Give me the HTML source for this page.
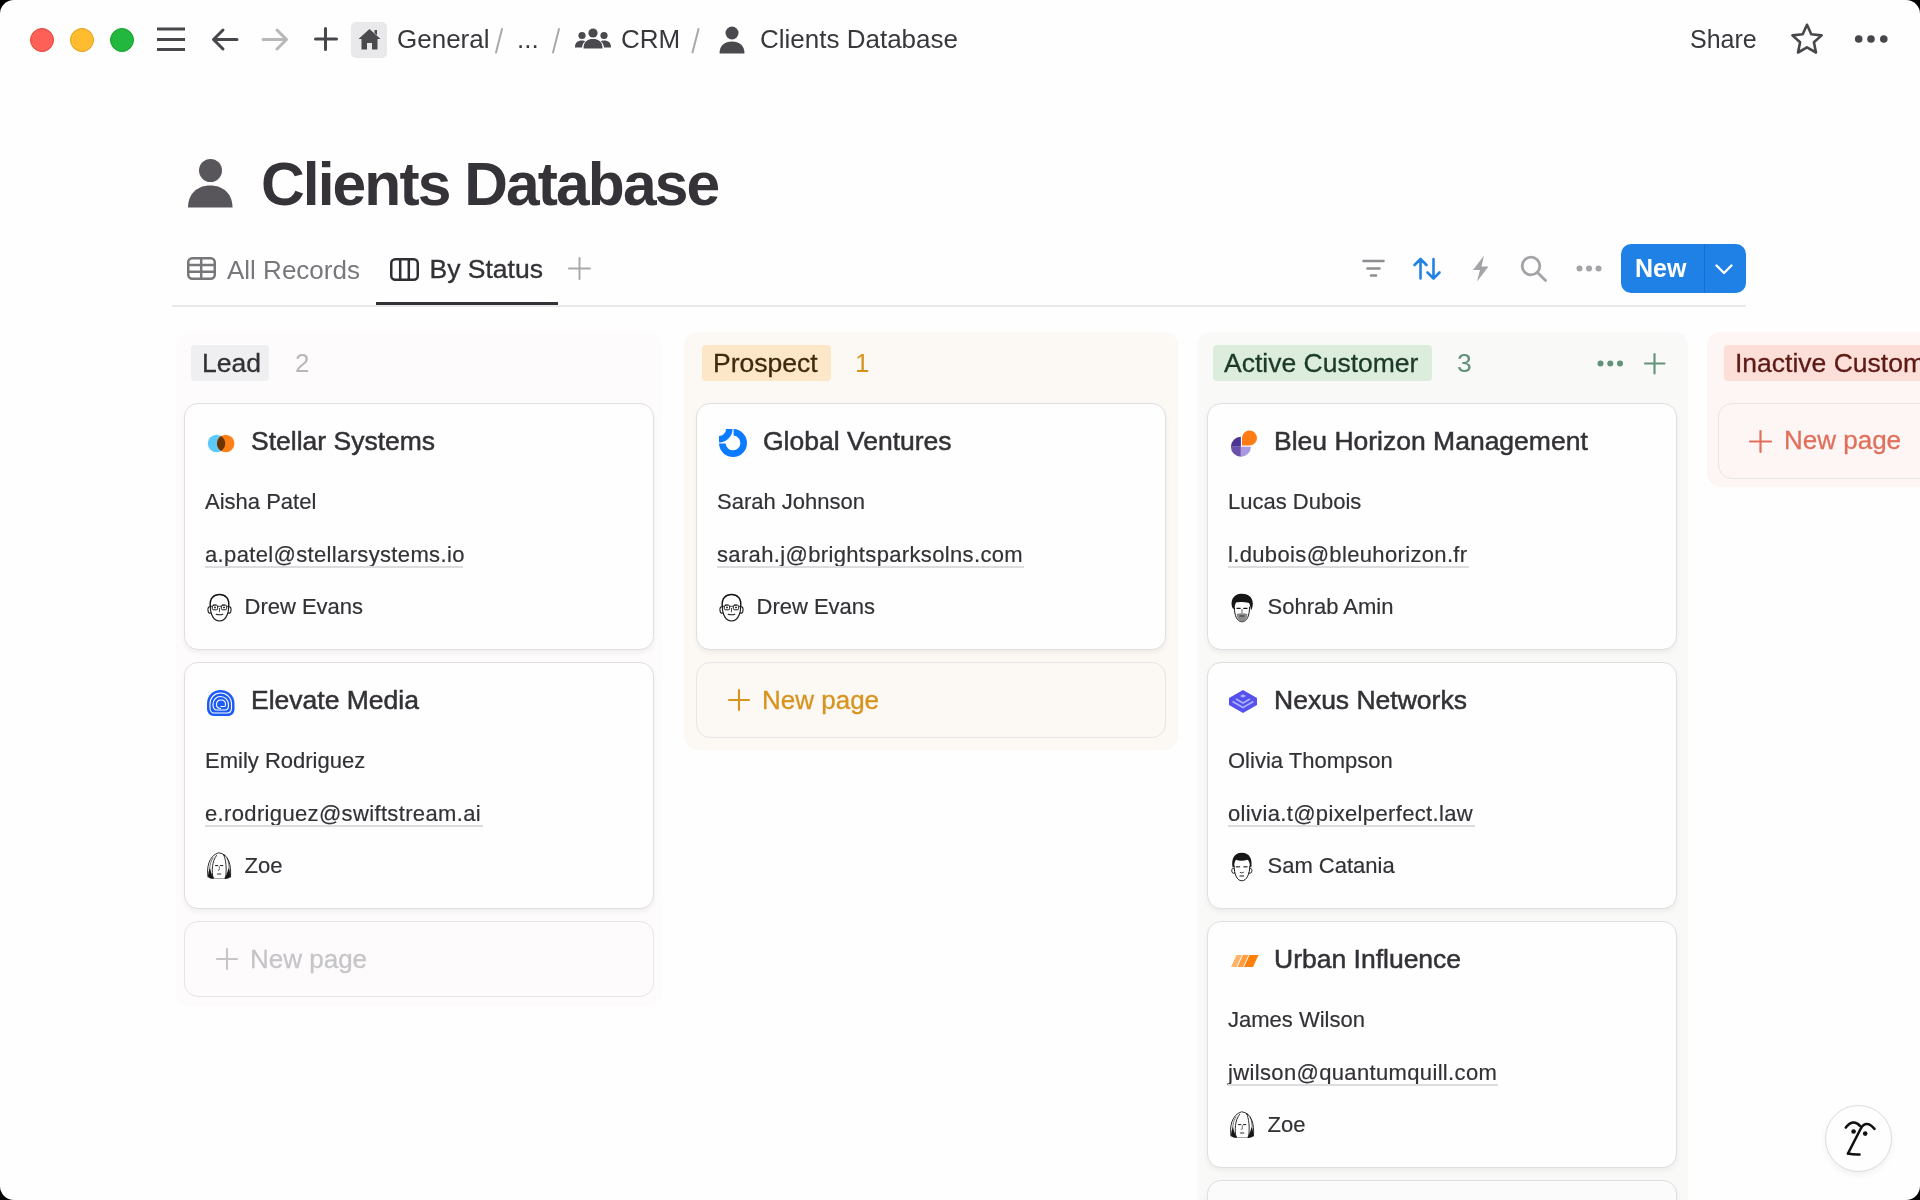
<!DOCTYPE html>
<html><head><meta charset="utf-8">
<style>
*{box-sizing:border-box;margin:0;padding:0}
html,body{width:1920px;height:1200px;overflow:hidden;background:#000}
body{font-family:"Liberation Sans",sans-serif;color:#333135}
#win{will-change:transform;position:absolute;left:0;top:0;width:1920px;height:1200px;background:#fffeff;border-radius:14px;overflow:hidden}
.a{position:absolute;white-space:nowrap;line-height:1}
svg{position:absolute;overflow:visible}
.col{position:absolute;border-radius:14px}
.card{position:absolute;width:470px;height:247px;background:#fffeff;border:1.5px solid #dfdee1;border-radius:14px;box-shadow:0 3px 5px rgba(15,15,15,0.05)}
.np{position:absolute;width:470px;height:76px;border:1.5px solid #e6e5e7;border-radius:14px}
.npt{-webkit-text-stroke:0.3px currentColor}
.ct{font-size:26.5px;-webkit-text-stroke:0.5px currentColor}
.cb{font-size:22px;-webkit-text-stroke:0.2px currentColor}
.eml{letter-spacing:0.35px}
.em{border-bottom:1.5px solid #dedde0;padding-bottom:0}
.tag{position:absolute;height:36px;border-radius:4px}
</style></head><body>
<div id="win">

<!-- traffic lights -->
<div class="a" style="left:30px;top:28px;width:24px;height:24px;border-radius:50%;background:#fe5f57;border:0.5px solid #e2463f"></div>
<div class="a" style="left:70px;top:28px;width:24px;height:24px;border-radius:50%;background:#febc2e;border:0.5px solid #dfa023"></div>
<div class="a" style="left:110px;top:28px;width:24px;height:24px;border-radius:50%;background:#22b83f;border:0.5px solid #1aa032"></div>

<!-- hamburger -->
<svg style="left:157px;top:27px" width="28" height="25"><g stroke="#47464a" stroke-width="3"><line x1="0" y1="2" x2="28" y2="2"/><line x1="0" y1="12.5" x2="28" y2="12.5"/><line x1="0" y1="22.5" x2="28" y2="22.5"/></g></svg>
<!-- back -->
<svg style="left:211px;top:28px" width="28" height="24"><g stroke="#47464a" stroke-width="3" fill="none" stroke-linecap="round" stroke-linejoin="round"><path d="M26,11.5 H2.5 M12,2 L2.5,11.5 L12,21"/></g></svg>
<!-- forward -->
<svg style="left:261px;top:28px" width="28" height="24"><g stroke="#b8b7ba" stroke-width="3" fill="none" stroke-linecap="round" stroke-linejoin="round"><path d="M2,11.5 H25.5 M16,2 L25.5,11.5 L16,21"/></g></svg>
<!-- plus -->
<svg style="left:314px;top:27px" width="24" height="24"><g stroke="#47464a" stroke-width="3" stroke-linecap="round"><path d="M11.5,1.5 V22.5 M1.5,12 H22.5"/></g></svg>
<!-- home box -->
<div class="a" style="left:351px;top:22px;width:36px;height:36px;border-radius:5px;background:#e9e8ea"></div>
<svg style="left:358px;top:28px" width="23" height="22" viewBox="0 0 23 22"><path fill="#4a494d" d="M11.5,1 L22.5,11 L19.5,11 L19.5,21.5 L14,21.5 L14,15 L9,15 L9,21.5 L3.5,21.5 L3.5,11 L0.5,11 Z M16.5,2 H19 V7 L16.5,5 Z"/></svg>

<div class="a" style="left:397px;top:26.2px;font-size:26px;color:#38373b">General</div>
<svg style="left:490px;top:24px" width="20" height="34"><path d="M12,5 L6,28.5" stroke="#a9a8ac" stroke-width="2" stroke-linecap="round"/></svg>
<div class="a" style="left:517px;top:26.2px;font-size:26px;color:#38373b">...</div>
<svg style="left:547px;top:24px" width="20" height="34"><path d="M12,5 L6,28.5" stroke="#a9a8ac" stroke-width="2" stroke-linecap="round"/></svg>
<!-- people icon -->
<svg style="left:575px;top:28px" width="36" height="21" viewBox="0 0 36 21"><g fill="#4a494d"><circle cx="18" cy="5" r="4.6"/><path d="M8.5,20.5 C8.5,13.5 12.5,11 18,11 C23.5,11 27.5,13.5 27.5,20.5 Z"/><circle cx="7" cy="7.5" r="3.6"/><path d="M0,19.5 C0,14.5 2.5,12.5 7,12.5 C8.5,12.5 9.5,12.8 10.3,13.3 C8.3,14.8 7.2,17 7,19.5 Z"/><circle cx="29" cy="7.5" r="3.6"/><path d="M36,19.5 C36,14.5 33.5,12.5 29,12.5 C27.5,12.5 26.5,12.8 25.7,13.3 C27.7,14.8 28.8,17 29,19.5 Z"/></g></svg>
<div class="a" style="left:621px;top:26.2px;font-size:26px;color:#38373b">CRM</div>
<svg style="left:686px;top:24px" width="20" height="34"><path d="M12.5,5 L6.5,28.5" stroke="#a9a8ac" stroke-width="2" stroke-linecap="round"/></svg>
<!-- person small -->
<svg style="left:719px;top:26px" width="26" height="28" viewBox="0 0 26 28"><g fill="#4a494d"><circle cx="13" cy="7" r="6.5"/><path d="M0.5,27.5 C0.5,19.5 5.5,15.5 13,15.5 C20.5,15.5 25.5,19.5 25.5,27.5 Z"/></g></svg>
<div class="a" style="left:760px;top:26.2px;font-size:26px;color:#38373b">Clients Database</div>

<div class="a" style="left:1690px;top:26.5px;font-size:25px;color:#38373b">Share</div>
<svg style="left:1790px;top:23px" width="34" height="33" viewBox="0 0 34 33"><path fill="none" stroke="#47464a" stroke-width="2.6" stroke-linejoin="round" d="M17,1.8 L21.3,11.3 L31.6,12.4 L23.9,19.3 L26,29.5 L17,24.3 L8,29.5 L10.1,19.3 L2.4,12.4 L12.7,11.3 Z"/></svg>
<svg style="left:1854px;top:34px" width="35" height="10"><g fill="#47464a"><circle cx="4.7" cy="5" r="3.8"/><circle cx="17" cy="5" r="3.8"/><circle cx="29.8" cy="5" r="3.8"/></g></svg>

<!-- title -->
<svg style="left:187px;top:158px" width="46" height="50" viewBox="0 0 46 50"><g fill="#58565b"><circle cx="23.5" cy="12.5" r="11.5"/><path d="M1,49.5 C1,36 10,27.5 23.2,27.5 C36.5,27.5 45.5,36 45.5,49.5 Z"/></g></svg>
<div class="a" style="left:261px;top:153.8px;font-size:60.5px;font-weight:700;color:#353337;letter-spacing:-1.9px">Clients Database</div>

<!-- tabs -->
<svg style="left:187px;top:257px" width="29" height="23" viewBox="0 0 29 23"><g fill="none" stroke="#77767a" stroke-width="2.5"><rect x="1.25" y="1.25" width="26.5" height="20.5" rx="4"/><path d="M14.2,1.5 V21.5 M1.5,8 H27.5 M1.5,14.8 H27.5"/></g></svg>
<div class="a" style="left:227px;top:256.7px;font-size:26px;color:#78777b">All Records</div>
<svg style="left:390px;top:258px" width="29" height="23" viewBox="0 0 29 23"><g fill="none" stroke="#2f2e32" stroke-width="2.5"><rect x="1.25" y="1.25" width="26.5" height="20.5" rx="4"/><path d="M10.2,1.5 V21.5 M18.8,1.5 V21.5"/></g></svg>
<div class="a" style="left:429.5px;top:256.3px;font-size:26.5px;color:#333135;-webkit-text-stroke:0.35px #333135">By Status</div>
<svg style="left:568px;top:257px" width="23" height="23"><g stroke="#a9a8ab" stroke-width="2" stroke-linecap="round"><path d="M11.5,1 V22 M1,11.5 H22"/></g></svg>
<div class="a" style="left:376px;top:302px;width:182px;height:3px;background:#333135"></div>
<div class="a" style="left:172px;top:305px;width:1574px;height:1.5px;background:#e9e8ea"></div>

<!-- toolbar -->
<svg style="left:1362px;top:259px" width="23" height="19"><g stroke="#8e8d91" stroke-width="2.6" stroke-linecap="round"><path d="M1.5,2 H21.5 M5.5,9.5 H17.5 M9,16.5 H14"/></g></svg>
<svg style="left:1413px;top:257px" width="28" height="24"><g stroke="#2383e2" stroke-width="2.6" fill="none" stroke-linecap="round" stroke-linejoin="round"><path d="M7.5,21.5 V2 M1.5,8 L7.5,2 L13.5,8 M20.5,2 V21.5 M14.5,15.5 L20.5,21.5 L26.5,15.5"/></g></svg>
<svg style="left:1471px;top:255px" width="19" height="27" viewBox="0 0 19 27"><path fill="#a4a3a7" d="M13,0.5 L2,15 H9 L6,26.5 L17.5,11.5 H10.5 Z"/></svg>
<svg style="left:1520px;top:255px" width="28" height="27"><g fill="none" stroke="#a4a3a7" stroke-width="2.8" stroke-linecap="round"><circle cx="11" cy="11" r="8.8"/><path d="M17.5,17.5 L25.5,25.5"/></g></svg>
<svg style="left:1576px;top:264px" width="26" height="9"><g fill="#a4a3a7"><circle cx="3.5" cy="4.5" r="3"/><circle cx="13" cy="4.5" r="3"/><circle cx="22.5" cy="4.5" r="3"/></g></svg>
<div class="a" style="left:1621px;top:244px;width:125px;height:49px;border-radius:10px;background:#1f80e6"></div>
<div class="a" style="left:1703.5px;top:244px;width:1px;height:49px;background:#1a6fc8"></div>
<div class="a" style="left:1635px;top:256px;font-size:25px;font-weight:700;color:#fff">New</div>
<svg style="left:1715px;top:264px" width="18" height="12"><path d="M1.5,1.5 L9,9 L16.5,1.5" fill="none" stroke="#fff" stroke-width="2.4" stroke-linecap="round" stroke-linejoin="round"/></svg>

<!-- ================= BOARD ================= -->
<!-- Lead column -->
<div class="col" style="left:176px;top:332px;width:486px;height:674px;background:#fdfbfc"></div>
<div class="tag" style="left:191px;top:345px;width:78px;background:#efeef0"></div>
<div class="a" style="left:202px;top:349.5px;font-size:26.5px;-webkit-text-stroke:0.3px #333135;color:#333135">Lead</div>
<div class="a" style="left:295px;top:350px;font-size:26px;color:#b7b6b9">2</div>

<!-- Prospect column -->
<div class="col" style="left:684px;top:332px;width:494px;height:418px;background:#fcf8f3"></div>
<div class="tag" style="left:702px;top:345px;width:129px;background:#fce8c9"></div>
<div class="a" style="left:713px;top:349.5px;font-size:26.5px;-webkit-text-stroke:0.3px #40290e;color:#40290e">Prospect</div>
<div class="a" style="left:855px;top:350px;font-size:26px;color:#d8931f">1</div>

<!-- Active column -->
<div class="col" style="left:1197px;top:332px;width:491px;height:900px;background:#f9f9f8"></div>
<div class="tag" style="left:1213px;top:345px;width:219px;background:#dcecdd"></div>
<div class="a" style="left:1224px;top:349.5px;font-size:26.5px;-webkit-text-stroke:0.3px #1c3a28;color:#1c3a28">Active Customer</div>
<div class="a" style="left:1457px;top:349.5px;font-size:26.5px;color:#62927a">3</div>
<svg style="left:1597px;top:359px" width="27" height="9"><g fill="#62927a"><circle cx="3.5" cy="4.5" r="3"/><circle cx="13.3" cy="4.5" r="3"/><circle cx="23" cy="4.5" r="3"/></g></svg>
<svg style="left:1644px;top:353px" width="22" height="22"><g stroke="#62927a" stroke-width="2.1" stroke-linecap="round"><path d="M10.5,1 V20.5 M1,10.5 H20.5"/></g></svg>

<!-- Inactive column -->
<div class="col" style="left:1707px;top:332px;width:400px;height:155px;background:#fef6f5"></div>
<div class="tag" style="left:1724px;top:345px;width:260px;background:#fddfda"></div>
<div class="a" style="left:1735px;top:349.5px;font-size:26.5px;-webkit-text-stroke:0.3px #5d1a15;color:#5d1a15">Inactive Customer</div>
<div class="np" style="left:1718px;top:402.5px;width:300px"></div>
<svg style="left:1749px;top:430px" width="23" height="23"><g stroke="#e0705c" stroke-width="2.2" stroke-linecap="round"><path d="M11.5,1 V22 M1,11.5 H22"/></g></svg>
<div class="a npt" style="left:1784px;top:427px;font-size:26px;color:#e0705c">New page</div>

<div class="card" style="left:184px;top:402.5px"></div>
<svg style="left:206.5px;top:433.5px" width="30" height="20" viewBox="0 0 30 20"><circle cx="9.5" cy="9.5" r="8.7" fill="#5ccbfc"/><circle cx="18.7" cy="9.5" r="8.7" fill="#ff7f17"/><path d="M14.1,2.1 A8.7,8.7 0 0 1 14.1,16.9 A8.7,8.7 0 0 1 14.1,2.1 Z" fill="#6a3300"/></svg>
<div class="a ct" style="left:251px;top:428.06px">Stellar Systems</div>
<div class="a cb" style="left:205px;top:491.17px">Aisha Patel</div>
<div class="a cb eml" style="left:205px;top:543.87px">a.patel@stellarsystems.io</div>
<div class="a" style="left:205px;top:566.0px;width:258px;height:1.5px;background:#dcdbde"></div>
<svg style="left:206px;top:591.5px" width="28" height="32" viewBox="0 0 28 32"><g fill="none" stroke="#161616" stroke-width="1.1" stroke-linecap="round"><path d="M4.3,14 C3.5,6.5 7.5,2.6 13.5,2.6 C19.5,2.6 23.5,6.5 22.7,14" stroke-width="1.5"/><path d="M4.3,14 C4.3,23 8,29 13.5,29 C19,29 22.7,23 22.7,14"/><path d="M4.2,15 C2,14 1.6,17 2.2,19.5 C2.6,21 3.5,21.4 4.8,21"/><path d="M22.8,15 C25,14 25.4,17 24.8,19.5 C24.4,21 23.5,21.4 22.2,21"/><rect x="6.3" y="13.2" width="5.4" height="4.6" rx="1.4" stroke-width="1"/><rect x="15.3" y="13.2" width="5.4" height="4.6" rx="1.4" stroke-width="1"/><path d="M11.7,14.3 H15.3 M4.4,14.3 H6.3 M20.7,14.3 H22.6" stroke-width="0.8"/><path d="M13.5,16.5 V19.5 C12.8,20 14.2,20 13.7,19.6" stroke-width="0.8"/><path d="M10.2,22.2 Q13.5,23.4 16.8,22.2"/></g><g fill="#161616"><path d="M7,13 Q9,11.8 11,13 Z M16,13 Q18,11.8 20,13 Z"/><circle cx="9" cy="15.4" r="0.9"/><circle cx="18" cy="15.4" r="0.9"/></g></svg>
<div class="a cb" style="left:244.5px;top:595.87px">Drew Evans</div>
<div class="card" style="left:184px;top:661.5px"></div>
<svg style="left:206px;top:688.5px" width="30" height="28" viewBox="0 0 30 28"><path fill="#1c5cf5" d="M14.5,1 C22,1 28.5,6.5 28.5,14.5 L28.5,20 C28.5,24.5 25.5,27 21.5,27 L8,27 C4,27 1,24 1,19.5 L1,14.5 C1,6.5 7,1 14.5,1 Z"/><g fill="none" stroke="#fff" stroke-width="1.1"><path d="M8,24 H21 C24.5,24 25.5,21.5 25.5,19 L25.5,15 C25.5,8.5 20.5,4 14.5,4 C8.5,4 4,8.5 4,15 L4,18.5 C4,22 6,24 8,24"/><path d="M9,21 H19 C21.5,21 22.5,19 22.5,16.5 C22.5,11 19,7.5 14.5,7.5 C10,7.5 7,11 7,15.5 C7,18.5 8.5,21 11,21"/><path d="M14.5,17.5 H18.5 C19.5,17.5 19.5,16.5 19.5,15.5 C19.5,12.5 17.5,11 15,11 C12,11 10.5,13 10.5,15.5 C10.5,18 12.5,19.5 15,19.5"/></g></svg>
<div class="a ct" style="left:251px;top:687.06px">Elevate Media</div>
<div class="a cb" style="left:205px;top:750.17px">Emily Rodriguez</div>
<div class="a cb eml" style="left:205px;top:802.87px">e.rodriguez@swiftstream.ai</div>
<div class="a" style="left:205px;top:825.0px;width:278px;height:1.5px;background:#dcdbde"></div>
<svg style="left:206px;top:850.5px" width="28" height="32" viewBox="0 0 28 32"><g fill="none" stroke="#161616" stroke-width="0.9" stroke-linecap="round"><path d="M2,26 C0.5,17 2.5,5 12.5,1.8 C22.5,2.5 25.5,14 24.5,26"/><path d="M7,27 C5.5,20 6,10 10.5,4.5"/><path d="M17.5,3.5 C20,8 21,18 19.5,27.5"/><path d="M4,24 C3,18 4,11 7,7 M21,7 C23.5,12 23.5,19 22.5,24" stroke-width="0.6"/><path d="M9,27.5 H17.5" stroke="#999"/><path d="M9.5,14.6 H11.8 M14.5,14.6 H16.8" stroke-width="1"/><path d="M13.3,15.5 V19 Q12.6,19.8 12,19.4" stroke-width="0.6"/><path d="M11.5,23 H14.8" stroke-width="0.9"/></g><g fill="#161616"><path d="M2,26 C2,22 3,19 4,17 C4.8,21 6,24.5 8.5,27.8 C6,28 3.5,27.5 2,26 Z"/><path d="M24.5,26 C24.5,22 23.5,19 22.5,17 C21.5,21 20.5,24.5 18,27.8 C20.5,28 23,27.5 24.5,26 Z"/><path d="M17,3.3 C18.5,3.6 19.3,4.3 19.7,5.5 C18.6,5.1 17.6,4.6 17,3.3 Z"/></g></svg>
<div class="a cb" style="left:244.5px;top:854.87px">Zoe</div>
<div class="np" style="left:184px;top:920.5px"></div>
<svg style="left:215.5px;top:947.5px" width="22" height="22"><g stroke="#c6c5c8" stroke-width="2.1" stroke-linecap="round"><path d="M11,1 V21 M1,11 H21"/></g></svg>
<div class="a npt" style="left:250px;top:945.89px;font-size:26px;color:#c6c5c8">New page</div>
<div class="card" style="left:696px;top:402.5px"></div>
<svg style="left:719px;top:429.0px" width="28" height="28" viewBox="0 0 28 28"><path fill="#0b7bff" d="M14.6,0 A14,14 0 1 1 0,14.6 L6.6,14.6 A7.4,7.4 0 1 0 14.6,6.6 Z"/><path fill="#0b7bff" d="M0,7 A7,7 0 0 0 7,0 L13.5,0 A13.5,13.5 0 0 1 0,13.5 Z"/></svg>
<div class="a ct" style="left:763px;top:428.06px">Global Ventures</div>
<div class="a cb" style="left:717px;top:491.17px">Sarah Johnson</div>
<div class="a cb eml" style="left:717px;top:543.87px">sarah.j@brightsparksolns.com</div>
<div class="a" style="left:717px;top:566.0px;width:307px;height:1.5px;background:#dcdbde"></div>
<svg style="left:718px;top:591.5px" width="28" height="32" viewBox="0 0 28 32"><g fill="none" stroke="#161616" stroke-width="1.1" stroke-linecap="round"><path d="M4.3,14 C3.5,6.5 7.5,2.6 13.5,2.6 C19.5,2.6 23.5,6.5 22.7,14" stroke-width="1.5"/><path d="M4.3,14 C4.3,23 8,29 13.5,29 C19,29 22.7,23 22.7,14"/><path d="M4.2,15 C2,14 1.6,17 2.2,19.5 C2.6,21 3.5,21.4 4.8,21"/><path d="M22.8,15 C25,14 25.4,17 24.8,19.5 C24.4,21 23.5,21.4 22.2,21"/><rect x="6.3" y="13.2" width="5.4" height="4.6" rx="1.4" stroke-width="1"/><rect x="15.3" y="13.2" width="5.4" height="4.6" rx="1.4" stroke-width="1"/><path d="M11.7,14.3 H15.3 M4.4,14.3 H6.3 M20.7,14.3 H22.6" stroke-width="0.8"/><path d="M13.5,16.5 V19.5 C12.8,20 14.2,20 13.7,19.6" stroke-width="0.8"/><path d="M10.2,22.2 Q13.5,23.4 16.8,22.2"/></g><g fill="#161616"><path d="M7,13 Q9,11.8 11,13 Z M16,13 Q18,11.8 20,13 Z"/><circle cx="9" cy="15.4" r="0.9"/><circle cx="18" cy="15.4" r="0.9"/></g></svg>
<div class="a cb" style="left:756.5px;top:595.87px">Drew Evans</div>
<div class="np" style="left:696px;top:661.5px"></div>
<svg style="left:727.5px;top:688.5px" width="22" height="22"><g stroke="#d8931f" stroke-width="2.1" stroke-linecap="round"><path d="M11,1 V21 M1,11 H21"/></g></svg>
<div class="a npt" style="left:762px;top:686.89px;font-size:26px;color:#d8931f">New page</div>
<div class="card" style="left:1207px;top:402.5px"></div>
<svg style="left:1230px;top:429.5px" width="28" height="28" viewBox="0 0 28 28"><path fill="#4b3491" d="M10.9,16.7 V6.7 A10,10 0 0 0 0.9,16.7 Z"/><path fill="#6a50a9" d="M10.9,16.7 H0.9 A10,10 0 0 0 10.9,26.7 Z"/><path fill="#aa98e0" d="M10.9,16.7 V26.7 A10,10 0 0 0 20.9,16.7 Z"/><path fill="#ff7b14" d="M12,15.5 V8 A7.5,7.5 0 0 1 19.5,0.5 A7.5,7.5 0 0 1 27,8 A7.5,7.5 0 0 1 19.5,15.5 Z"/></svg>
<div class="a ct" style="left:1274px;top:428.06px">Bleu Horizon Management</div>
<div class="a cb" style="left:1228px;top:491.17px">Lucas Dubois</div>
<div class="a cb eml" style="left:1228px;top:543.87px">l.dubois@bleuhorizon.fr</div>
<div class="a" style="left:1228px;top:566.0px;width:241px;height:1.5px;background:#dcdbde"></div>
<svg style="left:1229px;top:591.5px" width="28" height="32" viewBox="0 0 28 32"><g fill="#161616"><path d="M3.5,16 C1,10 3.5,2.5 11.5,1.8 C17.5,1.2 23.5,4 23.8,11 C24,14 23,17 22,18.5 C21.5,15 21,12.5 20,11 C15.5,10 10,9.5 7,10.5 C6,12.5 5.5,15 5.5,17.5 Z"/></g><g fill="none" stroke="#161616" stroke-width="1" stroke-linecap="round"><path d="M5.5,16 C5.2,23 8,29.8 13,29.8 C18,29.8 20.8,23 20.5,15"/><path d="M8,16.3 H11.2 M14.8,16.3 H18" stroke-width="1.3"/><path d="M13,17.5 V20.5" stroke-width="0.7"/></g><path fill="#8a8a8a" d="M7.6,22 C9.5,21 16.5,21 18.4,22 C18,26.5 16,29.6 13,29.6 C10,29.6 8,26.5 7.6,22 Z"/><path d="M10.5,24 H15.5" stroke="#333" stroke-width="1"/></svg>
<div class="a cb" style="left:1267.5px;top:595.87px">Sohrab Amin</div>
<div class="card" style="left:1207px;top:661.5px"></div>
<svg style="left:1229px;top:690.0px" width="30" height="25" viewBox="0 0 30 25"><path fill="#5651ee" d="M14,0 L28,8 V15 L14,23 L0,15 V8 Z"/><g fill="none" stroke="#a9b2fc" stroke-width="1.6"><path d="M3.5,11.5 L14,17.5 L24.5,11.5"/><path d="M7,9 L14,13 L21,9"/></g><path fill="#a9b2fc" d="M14,4.2 L17,6 L14,7.8 L11,6 Z"/></svg>
<div class="a ct" style="left:1274px;top:687.06px">Nexus Networks</div>
<div class="a cb" style="left:1228px;top:750.17px">Olivia Thompson</div>
<div class="a cb eml" style="left:1228px;top:802.87px">olivia.t@pixelperfect.law</div>
<div class="a" style="left:1228px;top:825.0px;width:247px;height:1.5px;background:#dcdbde"></div>
<svg style="left:1229px;top:850.5px" width="28" height="32" viewBox="0 0 28 32"><g fill="#161616"><path d="M3.6,16.5 C2.2,9 4.5,1.7 12.8,1.7 C21,1.7 23.5,8.5 22.3,16.5 L21,15.5 C20.8,12 19.8,9.5 18.5,8.8 C14.5,10 10,10 7,8.8 C5.8,10 5.2,13 5.2,15.5 Z"/></g><g fill="none" stroke="#161616" stroke-width="1" stroke-linecap="round"><path d="M5.2,15 C5,23 8,29.8 12.8,29.8 C17.6,29.8 20.8,23 20.8,15"/><path d="M5,17.5 C3,16.5 2.3,19 3,21 C3.5,22.3 4.5,22.5 5.6,22"/><path d="M20.6,17.5 C22.6,16.5 23.3,19 22.6,21 C22.1,22.3 21.1,22.5 20,22"/><path d="M11,25 H14.6" stroke-width="1.2"/><path d="M11.2,21.5 Q12.8,22.5 14.4,21.5" stroke-width="0.8"/></g><g stroke="#555" stroke-width="1.6" stroke-linecap="round"><path d="M7.5,15.8 H10.5 M15,15.8 H18"/></g></svg>
<div class="a cb" style="left:1267.5px;top:854.87px">Sam Catania</div>
<div class="card" style="left:1207px;top:920.5px"></div>
<svg style="left:1229.5px;top:954.0px" width="30" height="14" viewBox="0 0 30 14"><path fill="#ffb46a" d="M6.5,1 H12 L6.5,13 H1 Z"/><path fill="#ff9d40" d="M13,1 H18.5 L13,13 H7.5 Z"/><path fill="#ff8008" d="M19.5,1 H28.5 L23,13 H14 Z"/></svg>
<div class="a ct" style="left:1274px;top:946.06px">Urban Influence</div>
<div class="a cb" style="left:1228px;top:1009.17px">James Wilson</div>
<div class="a cb eml" style="left:1228px;top:1061.87px">jwilson@quantumquill.com</div>
<div class="a" style="left:1228px;top:1084.0px;width:270px;height:1.5px;background:#dcdbde"></div>
<svg style="left:1229px;top:1109.5px" width="28" height="32" viewBox="0 0 28 32"><g fill="none" stroke="#161616" stroke-width="0.9" stroke-linecap="round"><path d="M2,26 C0.5,17 2.5,5 12.5,1.8 C22.5,2.5 25.5,14 24.5,26"/><path d="M7,27 C5.5,20 6,10 10.5,4.5"/><path d="M17.5,3.5 C20,8 21,18 19.5,27.5"/><path d="M4,24 C3,18 4,11 7,7 M21,7 C23.5,12 23.5,19 22.5,24" stroke-width="0.6"/><path d="M9,27.5 H17.5" stroke="#999"/><path d="M9.5,14.6 H11.8 M14.5,14.6 H16.8" stroke-width="1"/><path d="M13.3,15.5 V19 Q12.6,19.8 12,19.4" stroke-width="0.6"/><path d="M11.5,23 H14.8" stroke-width="0.9"/></g><g fill="#161616"><path d="M2,26 C2,22 3,19 4,17 C4.8,21 6,24.5 8.5,27.8 C6,28 3.5,27.5 2,26 Z"/><path d="M24.5,26 C24.5,22 23.5,19 22.5,17 C21.5,21 20.5,24.5 18,27.8 C20.5,28 23,27.5 24.5,26 Z"/><path d="M17,3.3 C18.5,3.6 19.3,4.3 19.7,5.5 C18.6,5.1 17.6,4.6 17,3.3 Z"/></g></svg>
<div class="a cb" style="left:1267.5px;top:1113.87px">Zoe</div>
<div class="card" style="left:1207px;top:1179.5px;background:#fbfbfb"></div>

<!-- AI button -->
<div class="a" style="left:1825px;top:1104.5px;width:67px;height:67px;border-radius:50%;background:#fffeff;border:1.5px solid #dddcdf;box-shadow:0 3px 6px rgba(0,0,0,0.06)"></div>
<svg style="left:1845px;top:1121px" width="32" height="36" viewBox="0 0 32 36"><g fill="none" stroke="#111" stroke-width="2.6" stroke-linecap="round" stroke-linejoin="round"><path d="M0.8,6.5 Q8,-2.5 15,4.8"/><path d="M3,32.5 L15.8,7.5 Q21,-1.5 29.5,7.8"/><path d="M3,32.5 Q8,33.8 14.5,33.5"/></g><g fill="#111"><circle cx="8.6" cy="10.5" r="2.3"/><circle cx="20.2" cy="12.6" r="2.3"/></g></svg>

</div>
</body></html>
